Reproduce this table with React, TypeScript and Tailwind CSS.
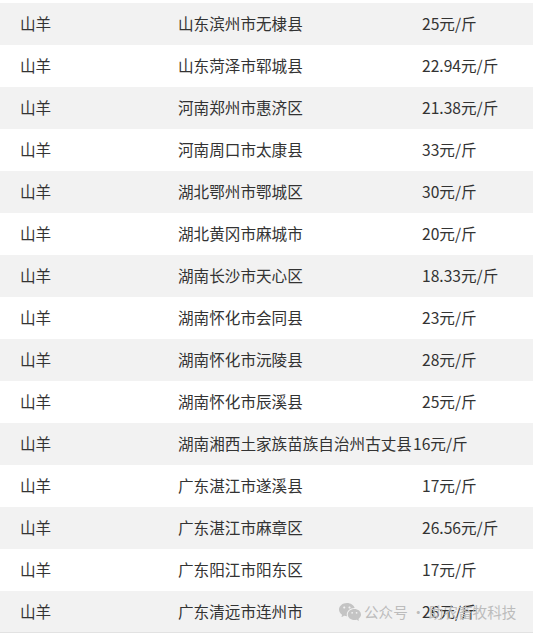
import { RiWechatFill } from "react-icons/ri";

type Row = { name: string; area: string; price: string; shift?: boolean };

const rows: Row[] = [
  { name: "山羊", area: "山东滨州市无棣县", price: "25元/斤" },
  { name: "山羊", area: "山东菏泽市郓城县", price: "22.94元/斤" },
  { name: "山羊", area: "河南郑州市惠济区", price: "21.38元/斤" },
  { name: "山羊", area: "河南周口市太康县", price: "33元/斤" },
  { name: "山羊", area: "湖北鄂州市鄂城区", price: "30元/斤" },
  { name: "山羊", area: "湖北黄冈市麻城市", price: "20元/斤" },
  { name: "山羊", area: "湖南长沙市天心区", price: "18.33元/斤" },
  { name: "山羊", area: "湖南怀化市会同县", price: "23元/斤" },
  { name: "山羊", area: "湖南怀化市沅陵县", price: "28元/斤" },
  { name: "山羊", area: "湖南怀化市辰溪县", price: "25元/斤" },
  { name: "山羊", area: "湖南湘西土家族苗族自治州古丈县", price: "16元/斤", shift: true },
  { name: "山羊", area: "广东湛江市遂溪县", price: "17元/斤" },
  { name: "山羊", area: "广东湛江市麻章区", price: "26.56元/斤" },
  { name: "山羊", area: "广东阳江市阳东区", price: "17元/斤" },
  { name: "山羊", area: "广东清远市连州市", price: "26元/斤" },
];

export default function App() {
  return (
    <div
      className="relative w-[533px] h-[636px] bg-white pt-[3px] text-[15.6px] text-[#333] overflow-hidden"
      style={{ fontFamily: '"Noto Sans CJK SC", "Noto Sans", sans-serif' }}
    >
      {rows.map((r, i) => (
        <div
          key={i}
          className={`flex items-center h-[42px] ${i % 2 === 0 ? "bg-[#f2f2f2]" : "bg-white"} ${
            i === rows.length - 1 ? "border-b border-[#e2e2e2]" : ""
          }`}
        >
          <span className="w-[178px] pl-[20px] shrink-0">{r.name}</span>
          <span className="w-[244px] shrink-0 whitespace-nowrap">{r.area}</span>
          <span className={`whitespace-nowrap ${r.shift ? "-ml-[9px]" : ""}`}>{r.price}</span>
        </div>
      ))}
      <div className="absolute left-[338px] top-[600px] flex items-center text-[14.6px] text-[#bcbcbc]">
        <RiWechatFill className="w-[24px] h-[24px] text-[#c4c4c4] mr-[2px]" />
        <span className="whitespace-nowrap">公众号</span>
        <span className="w-[21px] text-center">·</span>
        <span className="whitespace-nowrap">助农畜牧科技</span>
      </div>
    </div>
  );
}
